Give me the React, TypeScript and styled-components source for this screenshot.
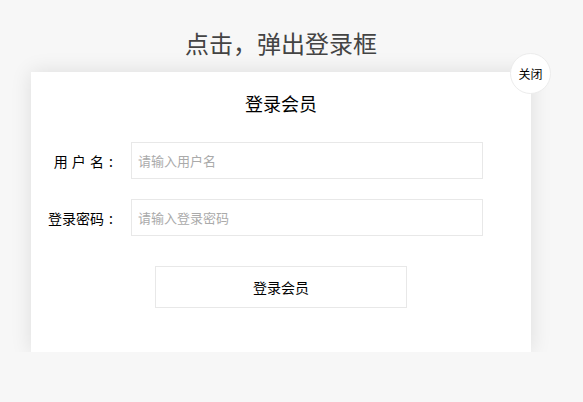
import React from "react";
import styled, { createGlobalStyle } from "styled-components";

const Global = createGlobalStyle`
  html, body { margin: 0; padding: 0; background: #f7f7f7; }
  body { font-family: "Noto Sans CJK SC", "Noto Sans", sans-serif; }
  * { box-sizing: border-box; }
`;

const Page = styled.div`
  width: 562px;
  padding-top: 27px;
  display: flex;
  flex-direction: column;
  align-items: center;
`;

const Heading = styled.h1`
  margin: 0 0 13px;
  height: 32px;
  line-height: 32px;
  font-size: 24px;
  font-weight: 400;
  color: #444;
`;

const Card = styled.div`
  position: relative;
  width: 500px;
  background: #fff;
  box-shadow: 0 0 20px rgba(0, 0, 0, 0.11);
  padding: 18px 0 44px;
  display: flex;
  flex-direction: column;
`;

const Close = styled.button`
  position: absolute;
  top: -19px;
  right: -20px;
  width: 41px;
  height: 41px;
  border-radius: 50%;
  border: 1px solid #ececec;
  background: #fff;
  font-family: inherit;
  font-size: 12px;
  color: #000;
  padding: 0;
  cursor: pointer;
`;

const Title = styled.div`
  height: 26px;
  line-height: 26px;
  text-align: center;
  font-size: 18px;
  color: #000;
  margin-bottom: 26px;
`;

const Row = styled.div<{ $last?: boolean }>`
  display: flex;
  align-items: center;
  gap: 13px;
  margin-bottom: ${(p) => (p.$last ? "30px" : "20px")};
`;

const Label = styled.label`
  width: 87px;
  text-align: right;
  font-size: 14px;
  color: #000;
  white-space: pre;
  word-spacing: 1px;
`;

const Colon = styled.span`
  display: inline-block;
  width: 14px;
  text-align: center;
`;

const Input = styled.input`
  width: 352px;
  height: 37px;
  border: 1px solid #e8e8e8;
  padding: 0 6px;
  font-family: inherit;
  font-size: 13px;
  color: #333;
  outline: none;
  &::placeholder { color: #aaa; }
`;

const Submit = styled.button`
  align-self: center;
  width: 252px;
  height: 42px;
  border: 1px solid #e8e8e8;
  background: #fff;
  font-family: inherit;
  font-size: 14px;
  color: #000;
  cursor: pointer;
`;

export default function App() {
  return (
    <>
      <Global />
      <Page>
        <Heading>点击，弹出登录框</Heading>
        <Card>
          <Close>关闭</Close>
          <Title>登录会员</Title>
          <Row>
            <Label>
              {"用 户 名"}
              <Colon>:</Colon>
            </Label>
            <Input placeholder="请输入用户名" />
          </Row>
          <Row $last>
            <Label>
              登录密码
              <Colon>:</Colon>
            </Label>
            <Input type="password" placeholder="请输入登录密码" />
          </Row>
          <Submit>登录会员</Submit>
        </Card>
      </Page>
    </>
  );
}
